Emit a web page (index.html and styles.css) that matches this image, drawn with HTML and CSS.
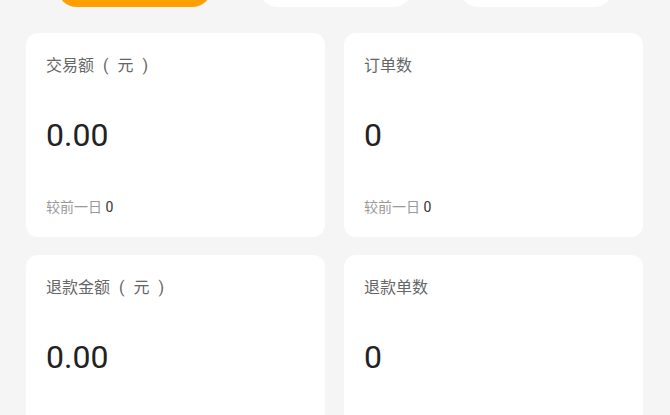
FILE: index.html
```html
<!DOCTYPE html>
<html lang="zh-CN">
<head>
<meta charset="utf-8">
<link rel="stylesheet" href="styles.css">
</head>
<body>
<div class="tabs">
  <div class="pill pill-active"></div>
  <div class="pill"></div>
  <div class="pill"></div>
</div>
<div class="grid">
  <div class="card">
    <div class="title">交易额 ( 元 )</div>
    <div class="value">0.00</div>
    <div class="sub">较前一日 <span class="num">0</span></div>
  </div>
  <div class="card">
    <div class="title">订单数</div>
    <div class="value">0</div>
    <div class="sub">较前一日 <span class="num">0</span></div>
  </div>
  <div class="card">
    <div class="title">退款金额 ( 元 )</div>
    <div class="value">0.00</div>
    <div class="sub">较前一日 <span class="num">0</span></div>
  </div>
  <div class="card">
    <div class="title">退款单数</div>
    <div class="value">0</div>
    <div class="sub">较前一日 <span class="num">0</span></div>
  </div>
</div>
</body>
</html>
```
FILE: styles.css
```css
html, body {
  margin: 0;
  padding: 0;
  background: #f5f5f5;
  font-family: Roboto, "Noto Sans CJK SC", sans-serif;
}
.tabs {
  display: flex;
  justify-content: center;
  gap: 46px;
  margin-top: -33px;
  margin-bottom: 26px;
}
.pill {
  width: 155px;
  height: 40px;
  border-radius: 20px;
  background: #ffffff;
}
.pill-active {
  background: #ffa000;
}
.grid {
  display: grid;
  grid-template-columns: 1fr 1fr;
  column-gap: 19px;
  row-gap: 18px;
  padding: 0 27px 0 26px;
}
.card {
  background: #ffffff;
  border-radius: 12px;
  padding: 21px 20px 20px;
  display: flex;
  flex-direction: column;
}
.title {
  font-size: 16px;
  line-height: 24px;
  color: #666666;
  word-spacing: 5px;
}
.value {
  margin-top: 37px;
  font-size: 32px;
  line-height: 40px;
  color: #222222;
}
.sub {
  margin-top: 42px;
  font-size: 14px;
  line-height: 20px;
  color: #999999;
}
.num {
  color: #333333;
}
```
